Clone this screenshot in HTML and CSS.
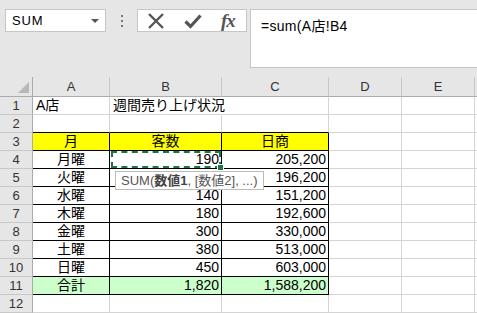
FILE: index.html
```html
<!doctype html>
<html>
<head>
  <title>A店 - 週間売り上げ状況</title>
  <meta charset="utf-8">
  <link rel="stylesheet" href="styles.css">
</head>
<body>
  <div class="toolbar">
    <div class="namebox">
      <span>SUM</span>
      <span class="arrow"></span>
    </div>
    <div class="dots"><i></i><i></i><i></i></div>
    <div class="fxbox">
      <svg width="18" height="18" viewBox="0 0 18 18"><path d="M2 2L16 16M16 2L2 16" stroke="#555" stroke-width="2.4" fill="none"/></svg>
      <svg width="18" height="18" viewBox="0 0 18 18"><path d="M1.5 9.5L6.5 14.5L16.5 3.5" stroke="#555" stroke-width="3.2" fill="none"/></svg>
      <span class="fx">fx</span>
    </div>
    <div class="formula">=sum(A店!B4</div>
  </div>

  <div class="sheet">
    <div class="corner"></div>
    <div class="colhead">A</div>
    <div class="colhead">B</div>
    <div class="colhead">C</div>
    <div class="colhead">D</div>
    <div class="colhead">E</div>
    <div class="colhead"></div>

    <div class="rowhead">1</div>
    <div class="cell">A店</div>
    <div class="cell over">週間売り上げ状況</div>
    <div class="cell"></div><div class="cell"></div><div class="cell"></div><div class="cell"></div>

    <div class="rowhead">2</div>
    <div class="cell above"></div>
    <div class="cell above"></div>
    <div class="cell above"></div>
    <div class="cell"></div><div class="cell"></div><div class="cell"></div>

    <div class="rowhead">3</div>
    <div class="cell tb yellow center">月</div>
    <div class="cell tb yellow center">客数</div>
    <div class="cell tb yellow center">日商</div>
    <div class="cell"></div><div class="cell"></div><div class="cell"></div>

    <div class="rowhead">4</div>
    <div class="cell tb center">月曜</div>
    <div class="cell tb num active">190
      <div class="tip">SUM(<b>数値1</b>, [数値2], ...)</div>
    </div>
    <div class="cell tb num">205,200</div>
    <div class="cell"></div><div class="cell"></div><div class="cell"></div>

    <div class="rowhead">5</div>
    <div class="cell tb center">火曜</div>
    <div class="cell tb num"></div>
    <div class="cell tb num">196,200</div>
    <div class="cell"></div><div class="cell"></div><div class="cell"></div>

    <div class="rowhead">6</div>
    <div class="cell tb center">水曜</div>
    <div class="cell tb num">140</div>
    <div class="cell tb num">151,200</div>
    <div class="cell"></div><div class="cell"></div><div class="cell"></div>

    <div class="rowhead">7</div>
    <div class="cell tb center">木曜</div>
    <div class="cell tb num">180</div>
    <div class="cell tb num">192,600</div>
    <div class="cell"></div><div class="cell"></div><div class="cell"></div>

    <div class="rowhead">8</div>
    <div class="cell tb center">金曜</div>
    <div class="cell tb num">300</div>
    <div class="cell tb num">330,000</div>
    <div class="cell"></div><div class="cell"></div><div class="cell"></div>

    <div class="rowhead">9</div>
    <div class="cell tb center">土曜</div>
    <div class="cell tb num">380</div>
    <div class="cell tb num">513,000</div>
    <div class="cell"></div><div class="cell"></div><div class="cell"></div>

    <div class="rowhead">10</div>
    <div class="cell tb center">日曜</div>
    <div class="cell tb num">450</div>
    <div class="cell tb num">603,000</div>
    <div class="cell"></div><div class="cell"></div><div class="cell"></div>

    <div class="rowhead">11</div>
    <div class="cell tb green center">合計</div>
    <div class="cell tb green num">1,820</div>
    <div class="cell tb green num">1,588,200</div>
    <div class="cell"></div><div class="cell"></div><div class="cell"></div>

    <div class="rowhead">12</div>
    <div class="cell"></div><div class="cell"></div><div class="cell"></div>
    <div class="cell"></div><div class="cell"></div><div class="cell"></div>
  </div>
</body>
</html>
```

FILE: styles.css
```css
body{
  margin:0;
  width:477px;
  height:313px;
  overflow:hidden;
  background:#e6e6e6;
  font-family:"Liberation Sans","Noto Sans CJK JP",sans-serif;
  color:#000;
}
.toolbar{
  display:flex;
  align-items:flex-start;
  height:77px;
  padding:9px 0 0 5px;
  box-sizing:border-box;
}
.namebox{
  display:flex;
  align-items:center;
  justify-content:space-between;
  width:101px;
  height:23px;
  padding:0 6px 0 6px;
  box-sizing:border-box;
  background:#fff;
  border:1px solid #c6c6c6;
  font-size:13px;
  letter-spacing:0.8px;
}
.arrow{
  width:0;
  height:0;
  border-left:4px solid transparent;
  border-right:4px solid transparent;
  border-top:4px solid #555;
}
.dots{
  display:flex;
  flex-direction:column;
  align-items:center;
  gap:3px;
  width:31px;
  padding-top:6px;
}
.dots i{
  width:2px;
  height:2px;
  background:#777;
}
.fxbox{
  display:flex;
  align-items:center;
  gap:19px;
  width:110px;
  height:23px;
  padding-left:9px;
  box-sizing:border-box;
  background:#fff;
  border:1px solid #c6c6c6;
}
.fx{
  font-family:"Liberation Serif",serif;
  font-style:italic;
  font-weight:bold;
  font-size:19px;
  color:#555;
  letter-spacing:-1px;
}
.formula{
  flex:1;
  height:59px;
  margin-left:3px;
  padding:5px 0 0 10px;
  box-sizing:border-box;
  background:#fff;
  border:1px solid #c6c6c6;
  border-right:none;
  font-size:14px;
  letter-spacing:0.3px;
}
.sheet{
  display:grid;
  grid-template-columns:33px 77px 112px 107px 73px 73px 1fr;
  grid-template-rows:20px repeat(12,18px);
  font-size:14px;
}
.corner{
  position:relative;
  background:#e6e6e6;
  border-right:1px solid #ababab;
  border-bottom:1px solid #ababab;
}
.corner::after{
  content:"";
  position:absolute;
  right:3px;
  bottom:3px;
  border-left:11px solid transparent;
  border-bottom:11px solid #b8b8b8;
}
.colhead{
  display:flex;
  align-items:center;
  justify-content:center;
  background:#e6e6e6;
  border-right:1px solid #c8c8c8;
  border-bottom:1px solid #ababab;
  font-size:13px;
  color:#333;
}
.rowhead{
  display:flex;
  align-items:center;
  justify-content:center;
  background:#e6e6e6;
  border-right:1px solid #ababab;
  border-bottom:1px solid #c8c8c8;
  font-size:13px;
  color:#333;
}
.cell{
  position:relative;
  background:#fff;
  border-right:1px solid #d4d4d4;
  border-bottom:1px solid #d4d4d4;
  padding:0 3px;
  line-height:17px;
  white-space:nowrap;
}
.over{
  z-index:1;
  border-right-color:#fff;
}
.above{
  border-bottom-color:#000;
}
.tb{
  border-right-color:#000;
  border-bottom-color:#000;
}
.center{
  text-align:center;
}
.num{
  text-align:right;
  padding-right:2px;
}
.yellow{
  background:#ffff00;
}
.green{
  background:#ccffcc;
}
.active::after{
  content:"";
  position:absolute;
  left:1px;
  top:0;
  right:0;
  bottom:0;
  border:2px dashed #217346;
  pointer-events:none;
}
.active::before{
  content:"";
  position:absolute;
  right:-3px;
  bottom:-3px;
  width:5px;
  height:5px;
  background:#217346;
  border:1px solid #fff;
  z-index:2;
}
.tip{
  position:absolute;
  left:5px;
  top:20px;
  z-index:3;
  padding:0 5px;
  background:#fff;
  border:1px solid #bbb;
  font-size:13px;
  line-height:17px;
  color:#555;
  text-align:left;
}
.tip b{
  color:#444;
}
```
